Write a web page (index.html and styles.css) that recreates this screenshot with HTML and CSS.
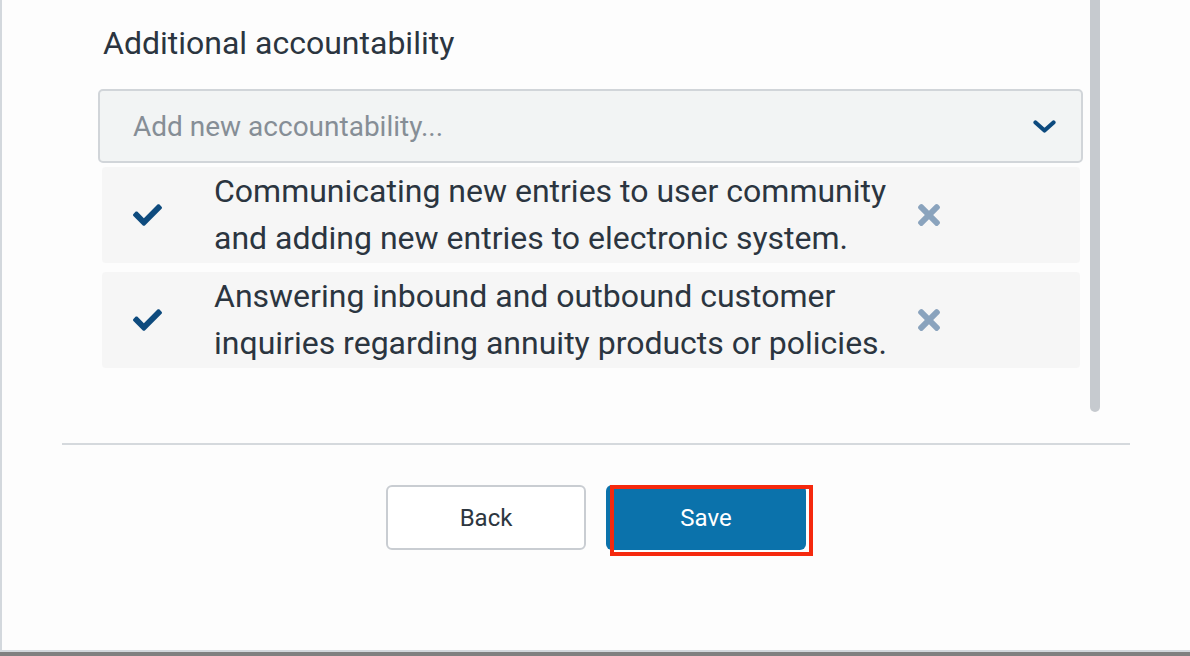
FILE: index.html
```html
<!DOCTYPE html>
<html lang="en">
<head>
<meta charset="utf-8">
<title>Additional accountability</title>
<link rel="stylesheet" href="styles.css">
</head>
<body>
<div class="frame">
  <div class="scroll-row">
    <div class="content">
      <h2 class="title">Additional accountability</h2>
      <div class="select">
        <span class="placeholder">Add new accountability...</span>
        <svg class="chevron" width="23" height="13" viewBox="0 0 23 13"><polyline points="2.5,2.5 11.5,10.5 20.5,2.5" fill="none" stroke="#0d4a7e" stroke-width="4.2" stroke-linecap="round" stroke-linejoin="round"/></svg>
      </div>
      <ul class="items">
        <li class="item">
          <svg class="check" width="29" height="22" viewBox="0 64 512 384"><path fill="#0e4b7e" d="M173.898 439.404l-166.4-166.4c-9.997-9.997-9.997-26.206 0-36.204l36.203-36.204c9.997-9.998 26.207-9.998 36.204 0L192 312.69 432.095 72.596c9.997-9.997 26.207-9.997 36.204 0l36.203 36.204c9.997 9.997 9.997 26.206 0 36.204l-294.4 294.401c-9.998 9.997-26.207 9.997-36.204-.001z"/></svg>
          <span class="item-text">Communicating new entries to user community and adding new entries to electronic system.</span>
          <svg class="remove" width="22" height="22" viewBox="0 80 352 352"><path fill="#8aa3bd" d="M242.72 256l100.07-100.07c12.28-12.28 12.28-32.190 0-44.48l-22.24-22.24c-12.28-12.28-32.19-12.28-44.48 0L176 189.28 75.93 89.21c-12.28-12.28-32.19-12.28-44.48 0L9.21 111.45c-12.28 12.28-12.28 32.19 0 44.48L109.28 256 9.21 356.07c-12.28 12.28-12.28 32.19 0 44.48l22.24 22.24c12.28 12.28 32.2 12.28 44.48 0L176 322.72l100.07 100.07c12.28 12.28 32.2 12.28 44.48 0l22.24-22.240c12.28-12.28 12.28-32.19 0-44.48L242.72 256z"/></svg>
        </li>
        <li class="item">
          <svg class="check" width="29" height="22" viewBox="0 64 512 384"><path fill="#0e4b7e" d="M173.898 439.404l-166.4-166.4c-9.997-9.997-9.997-26.206 0-36.204l36.203-36.204c9.997-9.998 26.207-9.998 36.204 0L192 312.69 432.095 72.596c9.997-9.997 26.207-9.997 36.204 0l36.203 36.204c9.997 9.997 9.997 26.206 0 36.204l-294.4 294.401c-9.998 9.997-26.207 9.997-36.204-.001z"/></svg>
          <span class="item-text">Answering inbound and outbound customer inquiries regarding annuity products or policies.</span>
          <svg class="remove" width="22" height="22" viewBox="0 80 352 352"><path fill="#8aa3bd" d="M242.72 256l100.07-100.070c12.28-12.28 12.28-32.19 0-44.48l-22.24-22.24c-12.28-12.28-32.19-12.28-44.48 0L176 189.28 75.93 89.21c-12.28-12.28-32.19-12.28-44.48 0L9.21 111.45c-12.28 12.28-12.28 32.19 0 44.48L109.28 256 9.21 356.07c-12.28 12.28-12.28 32.19 0 44.48l22.24 22.24c12.28 12.28 32.2 12.28 44.48 0L176 322.72l100.07 100.07c12.28 12.28 32.2 12.28 44.48 0l22.24-22.24c12.28-12.28 12.28-32.19 0-44.48L242.72 256z"/></svg>
        </li>
      </ul>
    </div>
    <div class="scrollbar"></div>
  </div>
  <hr class="divider">
  <div class="actions">
    <button class="btn btn-back">Back</button>
    <button class="btn btn-save">Save<span class="highlight"></span></button>
  </div>
</div>
<div class="bottom-bar"></div>
</body>
</html>
```

FILE: styles.css
```css
html, body {
  margin: 0;
  padding: 0;
  background: #fdfdfd;
  font-family: Roboto, "Noto Sans", sans-serif;
}

.frame {
  box-sizing: border-box;
  width: 1190px;
  height: 652px;
  border-left: 2px solid #d3d8dd;
  border-bottom: 2px solid #d3d8dd;
  background: #fdfdfd;
  display: flex;
  flex-direction: column;
}

.bottom-bar {
  height: 4px;
  background: #808080;
}

.scroll-row {
  display: flex;
  align-items: flex-start;
  height: 412px;
  padding-left: 96px;
}

.content {
  width: 985px;
}

.scrollbar {
  width: 10px;
  height: 412px;
  margin-left: 7px;
  background: #c6cacf;
  border-radius: 0 0 5px 5px;
}

.title {
  margin: 0;
  padding: 26px 0 0 5px;
  font-size: 32px;
  line-height: 34px;
  font-weight: 400;
  color: #2b3540;
}

.select {
  box-sizing: border-box;
  margin-top: 29px;
  height: 74px;
  border: 2px solid #d1d5d9;
  border-radius: 5px;
  background: #f2f4f4;
  display: flex;
  align-items: center;
  justify-content: space-between;
  padding: 0 25px 0 33px;
}

.placeholder {
  font-size: 28px;
  color: #868e96;
}

.chevron {
  display: block;
}

.items {
  list-style: none;
  margin: 4px 3px 0 4px;
  padding: 0;
}

.item {
  display: flex;
  align-items: center;
  height: 96px;
  margin-bottom: 9px;
  padding-left: 31px;
  background: #f6f6f6;
  border-radius: 4px;
}

.check {
  flex: none;
  display: block;
}

.item-text {
  width: 690px;
  margin-left: 52px;
  font-size: 32px;
  line-height: 47px;
  color: #2b3540;
}

.remove {
  flex: none;
  display: block;
  margin-left: 14px;
}

.divider {
  margin: 31px 60px 0 60px;
  border: none;
  height: 2px;
  background: #d5d9dd;
}

.actions {
  display: flex;
  justify-content: center;
  gap: 20px;
  margin-top: 40px;
}

.btn {
  box-sizing: border-box;
  width: 200px;
  height: 65px;
  border-radius: 6px;
  font-family: Roboto, "Noto Sans", sans-serif;
  font-size: 24px;
  cursor: pointer;
}

.btn-back {
  background: #ffffff;
  border: 2px solid #c9cdd2;
  color: #2d3640;
}

.btn-save {
  position: relative;
  background: #0b72ab;
  border: none;
  color: #ffffff;
}

.highlight {
  position: absolute;
  left: 4px;
  top: 0;
  width: 203px;
  height: 71px;
  box-sizing: border-box;
  border: 4px solid #f5290e;
  pointer-events: none;
}
```
